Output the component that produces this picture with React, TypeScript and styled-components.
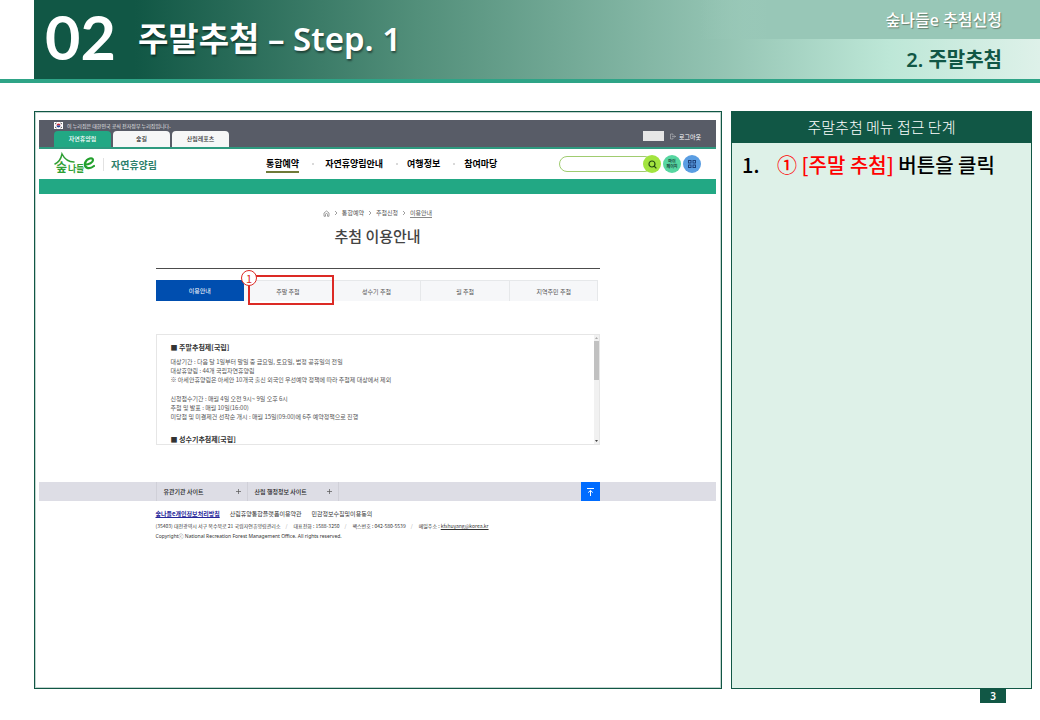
import React from "react";
import styled, { createGlobalStyle } from "styled-components";

const GlobalStyle = createGlobalStyle`
  *, *::before, *::after { box-sizing: border-box; }
  body {
    margin: 0;
    background: #fff;
    color: #000;
    font-family: "Noto Sans", "Noto Sans CJK KR", sans-serif;
  }
  button, input {
    font: inherit;
    color: inherit;
    border: 0;
    margin: 0;
    padding: 0;
    background: none;
  }
  button { cursor: pointer; }
  h1, h2, h3, p, ul, ol { margin: 0; padding: 0; font-weight: inherit; font-size: inherit; }
  ul, ol { list-style: none; }
  a { color: inherit; text-decoration: none; }
  svg { display: block; }
`;

const kr = `"Noto Sans CJK KR", "Noto Sans", sans-serif`;
const deep = "#115745";

const Slide = styled.div`
  display: flex;
  flex-direction: column;
  min-height: 100vh;
`;

/* ---------- slide heading ---------- */

const Banner = styled.header`
  padding-left: 34px;
  border-bottom: 4px solid #2fa487;
`;

const BannerFill = styled.div`
  display: flex;
  height: 79px;
  background: linear-gradient(
    90deg,
    ${deep} 0%,
    ${deep} 10%,
    #528f7a 38%,
    #93c3b2 68%,
    #bde7d7 85%,
    #def1e9 100%
  );
`;

const Chapter = styled.p`
  width: 104px;
  padding-left: 11px;
  color: #fff;
  font-family: Lato, "Noto Sans", sans-serif;
  font-size: 61px;
  font-weight: 700;
  line-height: 74px;
`;

const SlideTitle = styled.h1`
  flex: 1;
  color: #fff;
  font-size: 33px;
  font-weight: 600;
  line-height: 78px;
  white-space: nowrap;
  text-shadow: 1px 2px 2px rgba(0, 0, 0, 0.45);
`;

const Sections = styled.div`
  width: 340px;
  text-align: right;
  font-weight: 600;
`;

const Course = styled.p`
  height: 39px;
  padding-right: 38px;
  background: linear-gradient(90deg, rgba(152, 199, 183, 0), #98c7b7 20%);
  color: #fff;
  font-size: 16px;
  font-weight: 500;
  line-height: 40px;
  text-shadow: 1px 1px 1px rgba(70, 80, 60, 0.6);
`;

const Section = styled.p`
  padding-right: 38px;
  color: ${deep};
  font-size: 20px;
  line-height: 42px;
`;

/* ---------- slide body ---------- */

const Body = styled.main`
  flex: 1;
  display: flex;
  gap: 9px;
  padding: 28px 8px 0 34px;
`;

const Stage = styled.section`
  flex: 1;
  min-width: 0;
  padding: 8px 5px 4px 4px;
  border: 1px solid ${deep};
  outline: 1px solid rgba(17, 87, 69, 0.25);
  outline-offset: -2px;
  font-family: ${kr};
`;

const Guide = styled.aside`
  flex: 0 0 301px;
  border: 1px solid ${deep};
  background: #def1e8;
`;

const GuideTitle = styled.h2`
  height: 31px;
  background: ${deep};
  color: #fff;
  font-family: ${kr};
  font-size: 15px;
  font-weight: 300;
  line-height: 30px;
  text-align: center;
`;

const Steps = styled.ol`
  padding: 7px 10px;
  font-family: ${kr};
  font-size: 20px;
  font-weight: 500;
  line-height: 30px;
`;

const Step = styled.li`
  display: grid;
  grid-template-columns: 35px 1fr;
  white-space: nowrap;
`;

const Target = styled.strong`
  color: #f00;
  font-weight: inherit;
`;

const PageFoot = styled.footer`
  display: flex;
  justify-content: flex-end;
  height: 31px;
  padding-right: 34px;
`;

const PageNumber = styled.span`
  width: 26px;
  height: 14px;
  background: ${deep};
  color: #fff;
  font-size: 10px;
  font-weight: 600;
  line-height: 14px;
  text-align: center;
`;

/* ---------- the booking site ---------- */

const TopBar = styled.div`
  display: flex;
  justify-content: space-between;
  height: 29px;
  padding: 0 15px;
  background: #585c67;
  border-bottom: 2px solid #2e9a7f;
`;

const Notice = styled.p`
  display: flex;
  align-items: center;
  gap: 4px;
  height: 11px;
  color: #e8e8ea;
  font-size: 5px;
`;

const SiteTabs = styled.nav`
  display: flex;
  gap: 2px;
`;

const SiteTab = styled.a<{ $active?: boolean }>`
  width: 57px;
  height: 16px;
  border-radius: 4px 4px 0 0;
  background: ${(p) => (p.$active ? "#22a884" : "#f6f7f7")};
  color: ${(p) => (p.$active ? "#fff" : "#333")};
  font-size: 6px;
  font-weight: 500;
  line-height: 16px;
  text-align: center;
`;

const Account = styled.div`
  display: flex;
  align-items: center;
  gap: 6px;
  padding-top: 5px;
  color: #fff;
  font-size: 6px;
`;

const UserName = styled.span`
  width: 21px;
  height: 10px;
  background: #e6e6e6;
`;

const Logout = styled.button`
  display: flex;
  align-items: center;
  gap: 3px;
`;

const SiteHeader = styled.div`
  display: flex;
  align-items: center;
  height: 30px;
  padding: 0 15px;
`;

const Brand = styled.a`
  display: flex;
  align-items: center;
  width: 212px;
  color: #2d7f6a;
  font-size: 10px;
  font-weight: 600;
`;

const BrandName = styled.span`
  margin-left: 8px;
  padding-left: 7px;
  border-left: 1px solid #e2e2e2;
  line-height: 13px;
`;

const Menu = styled.ul`
  display: flex;
  gap: 24px;
  font-size: 9px;
  font-weight: 700;
`;

const MenuItem = styled.li<{ $active?: boolean }>`
  position: relative;
  height: 17px;
  line-height: 15px;
  border-bottom: 2px solid ${(p) => (p.$active ? "#6f7a38" : "transparent")};
  &:first-child { margin-right: 2px; }
  &:not(:last-child)::after {
    content: "";
    position: absolute;
    top: 7px;
    right: -15px;
    width: 2px;
    height: 2px;
    border-radius: 50%;
    background: #ccc;
  }
`;

const Tools = styled.div`
  display: flex;
  align-items: center;
  gap: 2px;
  margin-left: auto;
`;

const Search = styled.form`
  display: flex;
  align-items: center;
`;

const SearchBox = styled.input`
  width: 94px;
  height: 16px;
  margin-right: -10px;
  padding: 0 14px 0 8px;
  border: 1px solid #a0cc70;
  border-radius: 8px;
  font-size: 7px;
  outline: 0;
`;

const RoundButton = styled.button<{ $tone: string }>`
  position: relative;
  display: grid;
  place-items: center;
  width: 18px;
  height: 18px;
  border-radius: 50%;
  background: ${(p) => p.$tone};
  color: #173f3a;
  font-size: 4px;
  font-weight: 700;
  line-height: 5px;
`;

const GreenBand = styled.div`
  height: 15px;
  background: #22a884;
`;

const Column = styled.div`
  width: calc(100% - 233px);
  margin: 0 auto;
`;

const Crumbs = styled.nav`
  display: flex;
  justify-content: center;
  align-items: center;
  gap: 4px;
  height: 10px;
  margin-top: 14px;
  color: #555;
  font-size: 6px;
  line-height: 8px;
`;

const Here = styled.a`
  border-bottom: 1px solid #888;
`;

const PageTitle = styled.h2`
  height: 51px;
  padding-top: 7px;
  border-bottom: 1px solid #4c4c4c;
  color: #444;
  font-size: 15px;
  font-weight: 500;
  line-height: 22px;
  text-align: center;
`;

const LotteryTabs = styled.div`
  display: grid;
  grid-template-columns: repeat(5, 1fr);
  height: 21px;
  margin: 11px 1px 33px 0;
`;

const LotteryTab = styled.div<{ $active?: boolean }>`
  position: relative;
  display: grid;
  border: solid #e6e8ea;
  border-width: ${(p) => (p.$active ? "0" : "1px 1px 0 0")};
  background: ${(p) => (p.$active ? "#004eaf" : "#f6f7f9")};
  color: ${(p) => (p.$active ? "#fff" : "#555")};
  font-size: 6px;
`;

const Callout = styled.div`
  position: absolute;
  z-index: 1;
  inset: -6px -2px -4px 4px;
  border: 2px solid #dc2a25;
  pointer-events: none;
`;

const CalloutNumber = styled.span`
  position: absolute;
  left: -9px;
  top: -7px;
  width: 16px;
  height: 16px;
  border: 1px solid #dc2a25;
  border-radius: 50%;
  background: #fff;
  color: #dc2a25;
  font-size: 11px;
  line-height: 14px;
  text-align: center;
`;

const Terms = styled.div`
  display: flex;
  height: 111px;
  border: 1px solid #e6e6e6;
`;

const TermsText = styled.div`
  flex: 1;
  overflow: hidden;
  padding: 7px 14px 0;
  color: #555;
  font-size: 6px;
  line-height: 9px;
`;

const TermsHead = styled.h3`
  padding-bottom: 5px;
  color: #333;
  font-size: 7px;
  font-weight: 600;
  line-height: 10px;
  p + & { padding: 3px 0 0; }
`;

const Lines = styled.p`
  padding-bottom: 10px;
`;

const ScrollTrack = styled.div`
  display: flex;
  flex-direction: column;
  align-items: center;
  width: 5px;
  background: #f1f1f1;
`;

const ScrollThumb = styled.div`
  width: 5px;
  height: 39px;
  margin-bottom: auto;
  background: #c1c1c1;
`;

const LinkBar = styled.div`
  margin-top: 37px;
  background: #dddde5;
`;

const LinkRow = styled(Column)`
  display: flex;
  height: 19px;
  border-left: 1px solid #d0d0d8;
`;

const SiteMenu = styled.button`
  display: flex;
  justify-content: space-between;
  align-items: center;
  width: 91px;
  padding: 0 6px 0 7px;
  border-right: 1px solid #d0d0d8;
  color: #222;
  font-size: 6px;
  font-weight: 500;
`;

const ToTop = styled.button`
  display: grid;
  place-items: center;
  width: 19px;
  margin-left: auto;
  background: #006cff;
  color: #fff;
`;

const Legal = styled(Column)`
  padding-top: 8px;
  color: #333;
  font-size: 5px;
  line-height: 10px;
`;

const Policies = styled.ul`
  display: flex;
  gap: 10px;
  padding-bottom: 2px;
  font-size: 6px;
`;

const Privacy = styled.a`
  color: #26269a;
  font-weight: 700;
  text-decoration: underline;
`;

const Contact = styled.ul`
  display: flex;
  gap: 6px;
  white-space: nowrap;
`;

const ContactItem = styled.li`
  &:not(:last-child)::after {
    content: "/";
    margin-left: 5px;
    color: #aaa;
  }
`;

const Mail = styled.a`
  text-decoration: underline;
`;

const Copyright = styled.p`
  font-family: "Noto Sans", ${kr};
`;

/* ---------- drawings ---------- */

const Flag = () => (
  <svg width="9" height="7" viewBox="0 0 18 14" aria-hidden="true">
    <rect width="18" height="14" fill="#fff" />
    <path d="M5 7a4 4 0 0 1 8 0z" fill="#cd2e3a" />
    <path d="M5 7a4 4 0 0 0 8 0z" fill="#24479c" />
    <path d="M2 4l3-2M13 2l3 2M2 10l3 2M13 12l3-2" stroke="#222" strokeWidth="1.6" />
  </svg>
);

const Logo = () => (
  <svg width="41" height="28" viewBox="0 0 41 28" role="img" aria-label="숲나들e">
    <g fill="#2f9f35" fontFamily="Noto Sans CJK KR, sans-serif" fontWeight="700">
      <text x="2" y="22" fontSize="12">숲</text>
      <text x="14" y="22" fontSize="9">나</text>
      <text x="22" y="22" fontSize="9">들</text>
    </g>
    <path
      d="M1 14C5 12 7 9 8 4c2 4 6 8 12 8"
      fill="none"
      stroke="#2f9f35"
      strokeWidth="1.5"
      strokeLinecap="round"
    />
    <path
      d="M31 14.500c4 0 8-2 8-4.500C39 7 33 8 31 13c-1 5 4 7 9 3"
      fill="none"
      stroke="#22a02c"
      strokeWidth="2.2"
      strokeLinecap="round"
    />
  </svg>
);

const LogoutIcon = () => (
  <svg width="6" height="7" viewBox="0 0 12 14" fill="none" stroke="#d0d0d4" aria-hidden="true">
    <path d="M6 2H1v10h5M6 2v3M6 9v3M4 7h7M9 5l2 2-2 2" />
  </svg>
);

const SearchIcon = () => (
  <svg width="9" height="9" viewBox="0 0 9 9" fill="none" stroke="#234a12" strokeWidth="1.2" aria-hidden="true">
    <circle cx="4" cy="4" r="3" />
    <path d="M6 6l2.400 2.400" />
  </svg>
);

const GridIcon = () => (
  <svg width="10" height="10" viewBox="0 0 10 10" fill="none" stroke="#1d3f78" aria-hidden="true">
    <rect x="1.500" y="1.500" width="2.500" height="2.500" />
    <rect x="6" y="1.500" width="2.500" height="2.500" />
    <rect x="1.500" y="6" width="2.500" height="2.500" />
    <rect x="6" y="6" width="2.500" height="2.500" />
  </svg>
);

const HomeIcon = () => (
  <svg width="7" height="7" viewBox="0 0 14 14" fill="none" stroke="#777" strokeWidth="1.4" aria-hidden="true">
    <path d="M2 6l5-4 5 4v6.500H9V9a2 2 0 0 0-4 0v3.500H2z" />
  </svg>
);

const Chevron = () => (
  <svg width="4" height="6" viewBox="0 0 8 12" fill="none" stroke="#888" strokeWidth="1.6" aria-hidden="true">
    <path d="M2 2l4 4-4 4" />
  </svg>
);

const PlusIcon = () => (
  <svg width="5" height="5" viewBox="0 0 5 5" stroke="#555" strokeWidth="0.7" aria-hidden="true">
    <path d="M2.500 0v5M0 2.500h5" />
  </svg>
);

const TopIcon = () => (
  <svg width="7" height="8" viewBox="0 0 7 8" fill="none" stroke="#fff" aria-hidden="true">
    <path d="M0 .5h7M3.500 8V2.500M1.200 4.600l2.300-2.200 2.300 2.200" />
  </svg>
);

const ScrollArrow = ({ down }: { down?: boolean }) => (
  <svg width="5" height="6" viewBox="0 0 5 6" fill={down ? "#444" : "#aaa"} aria-hidden="true">
    <path d={down ? "M1 2h3L2.500 4z" : "M1 4h3L2.500 2z"} />
  </svg>
);

const lotteries = ["이용안내", "주말 추첨", "성수기 추첨", "월 추첨", "지역주민 추첨"];
const menu = ["통합예약", "자연휴양림안내", "여행정보", "참여마당"];

const BookingSite = () => (
  <Stage>
    <TopBar>
      <div>
        <Notice>
          <Flag />이 누리집은 대한민국 공식 전자정부 누리집입니다.
        </Notice>
        <SiteTabs>
          <SiteTab href="#forest" $active>자연휴양림</SiteTab>
          <SiteTab href="#trail">숲길</SiteTab>
          <SiteTab href="#sports">산림레포츠</SiteTab>
        </SiteTabs>
      </div>
      <Account>
        <UserName />
        <Logout type="button"><LogoutIcon />로그아웃</Logout>
      </Account>
    </TopBar>

    <SiteHeader>
      <Brand href="#home">
        <Logo />
        <BrandName>자연휴양림</BrandName>
      </Brand>
      <Menu>
        {menu.map((name, i) => (
          <MenuItem key={name} $active={i === 0}><a href="#menu">{name}</a></MenuItem>
        ))}
      </Menu>
      <Tools>
        <Search>
          <SearchBox type="text" aria-label="검색어" />
          <RoundButton type="button" $tone="#a2e43f" aria-label="검색"><SearchIcon /></RoundButton>
        </Search>
        <RoundButton type="button" $tone="#56d6a0"><span>마이<br />페이지</span></RoundButton>
        <RoundButton type="button" $tone="#5a9de2" aria-label="전체메뉴"><GridIcon /></RoundButton>
      </Tools>
    </SiteHeader>
    <GreenBand />

    <Column>
      <Crumbs>
        <HomeIcon /><Chevron />
        <a href="#booking">통합예약</a><Chevron />
        <a href="#lottery">추첨신청</a><Chevron />
        <Here href="#guide">이용안내</Here>
      </Crumbs>
      <PageTitle>추첨 이용안내</PageTitle>
      <LotteryTabs>
        {lotteries.map((name, i) => (
          <LotteryTab key={name} $active={i === 0}>
            <button type="button">{name}</button>
            {i === 1 && <Callout><CalloutNumber>1</CalloutNumber></Callout>}
          </LotteryTab>
        ))}
      </LotteryTabs>
      <Terms>
        <TermsText>
          <TermsHead>■ 주말추첨제[국립]</TermsHead>
          <Lines>
            대상기간 : 다음 달 1일부터 말일 중 금요일, 토요일, 법정 공휴일의 전일<br />
            대상휴양림 : 44개 국립자연휴양림<br />
            ※ 아세안휴양림은 아세안 10개국 출신 외국인 우선예약 정책에 따라 추첨제 대상에서 제외
          </Lines>
          <Lines>
            신청접수기간 : 매월 4일 오전 9시~ 9일 오후 6시<br />
            추첨 및 발표 : 매월 10일(16:00)<br />
            미당첨 및 미결제건 선착순 개시 : 매월 15일(09:00)에 6주 예약정책으로 진행
          </Lines>
          <TermsHead>■ 성수기추첨제[국립]</TermsHead>
        </TermsText>
        <ScrollTrack>
          <ScrollArrow />
          <ScrollThumb />
          <ScrollArrow down />
        </ScrollTrack>
      </Terms>
    </Column>

    <LinkBar>
      <LinkRow>
        <SiteMenu type="button">유관기관 사이트<PlusIcon /></SiteMenu>
        <SiteMenu type="button">산림 행정정보 사이트<PlusIcon /></SiteMenu>
        <ToTop type="button" aria-label="맨 위로"><TopIcon /></ToTop>
      </LinkRow>
    </LinkBar>
    <Legal>
      <Policies>
        <li><Privacy href="#privacy">숲나들e개인정보처리방침</Privacy></li>
        <li><a href="#terms">산림휴양통합플랫폼이용약관</a></li>
        <li><a href="#consent">민감정보수집및이용동의</a></li>
      </Policies>
      <Contact>
        <ContactItem>(35403) 대전광역시 서구 복수북로 21 국립자연휴양림관리소</ContactItem>
        <ContactItem>대표전화 : 1588-3250</ContactItem>
        <ContactItem>팩스번호 : 042-580-5539</ContactItem>
        <ContactItem>메일주소 : <Mail href="mailto:kfshuyang@korea.kr">kfshuyang@korea.kr</Mail></ContactItem>
      </Contact>
      <Copyright>Copyrightⓒ National Recreation Forest Management Office. All rights reserved.</Copyright>
    </Legal>
  </Stage>
);

export default function App() {
  return (
    <Slide>
      <GlobalStyle />
      <Banner>
        <BannerFill>
          <Chapter>02</Chapter>
          <SlideTitle>주말추첨 – Step. 1</SlideTitle>
          <Sections>
            <Course>숲나들e 추첨신청</Course>
            <Section>2. 주말추첨</Section>
          </Sections>
        </BannerFill>
      </Banner>
      <Body>
        <BookingSite />
        <Guide>
          <GuideTitle>주말추첨 메뉴 접근 단계</GuideTitle>
          <Steps>
            <Step>
              <span>1.</span>
              <span><Target>① [주말 추첨]</Target> 버튼을 클릭</span>
            </Step>
          </Steps>
        </Guide>
      </Body>
      <PageFoot>
        <PageNumber>3</PageNumber>
      </PageFoot>
    </Slide>
  );
}
